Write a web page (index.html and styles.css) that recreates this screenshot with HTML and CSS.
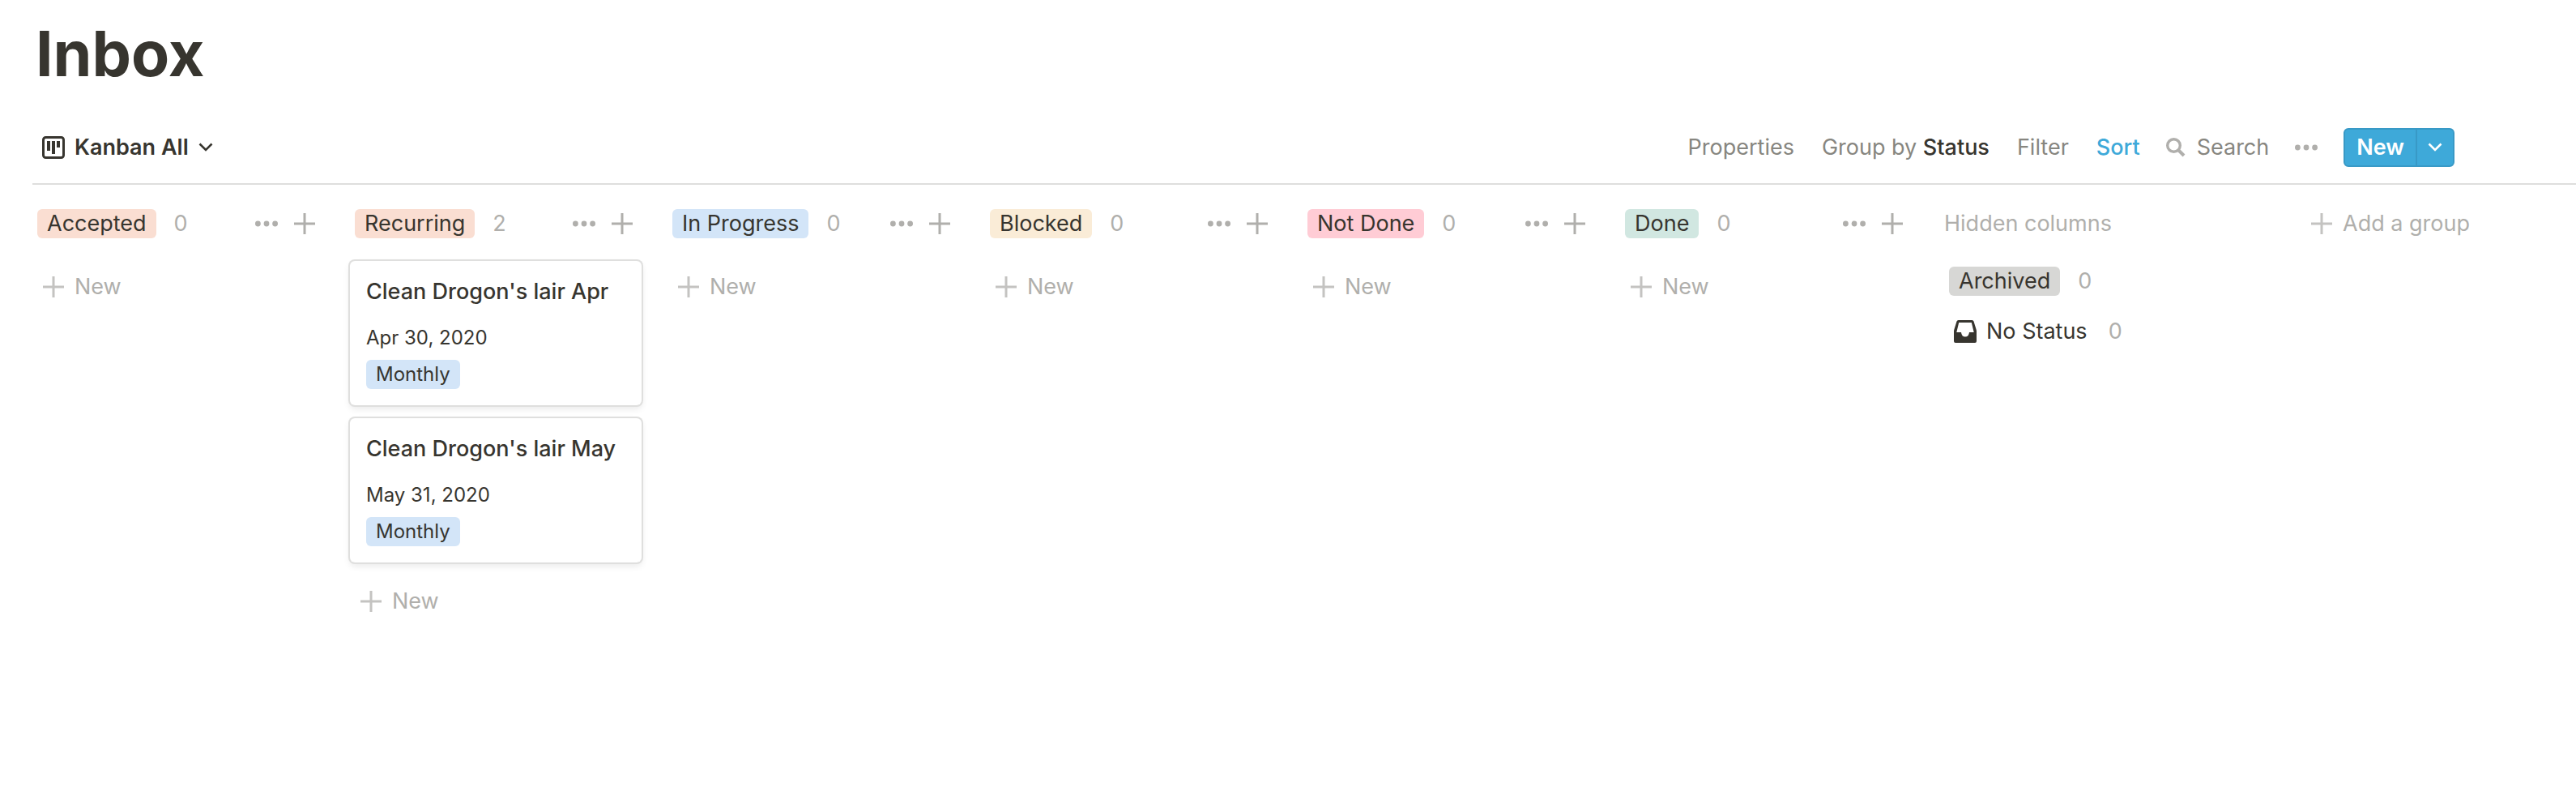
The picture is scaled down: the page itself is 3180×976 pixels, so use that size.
FILE: index.html
```html
<!DOCTYPE html>
<html lang="en">
<head>
<meta charset="utf-8">
<title>Inbox</title>
<link rel="stylesheet" href="styles.css">
</head>
<body>
<svg class="sprite" aria-hidden="true">
  <symbol id="plus" viewBox="0 0 26 26"><path d="M13 0V26M0 13H26" stroke="currentColor" stroke-width="3"/></symbol>
  <symbol id="dots" viewBox="0 0 28 8"><g fill="currentColor"><circle cx="3.4" cy="4" r="3.4"/><circle cx="14" cy="4" r="3.4"/><circle cx="24.6" cy="4" r="3.4"/></g></symbol>
  <symbol id="chevron" viewBox="0 0 18 12"><path d="M1.5 1.5L9 9L16.5 1.5" fill="none" stroke="currentColor" stroke-width="2.6"/></symbol>
</svg>
<main class="page">
  <h1 class="title">Inbox</h1>
  <div class="toolbar">
    <button class="view">
      <svg class="view-icon" viewBox="0 0 28 28"><rect x="1.5" y="1.5" width="25" height="25" rx="3" fill="none" stroke="currentColor" stroke-width="3"/><path d="M6 6h4v12H6zM12 6h4v16h-4zM18 6h4v8h-4z" fill="currentColor"/></svg>
      Kanban All
      <svg class="chevron"><use href="#chevron"/></svg>
    </button>
    <div class="actions">
      <div class="filters">
        <button>Properties</button>
        <button>Group by <span class="strong">Status</span></button>
        <button>Filter</button>
        <button class="sort">Sort</button>
      </div>
      <button class="search"><svg class="search-icon" viewBox="0 0 24 24"><circle cx="9.5" cy="9.5" r="7.8" fill="none" stroke="currentColor" stroke-width="3.4"/><path d="M15 15L22 22" stroke="currentColor" stroke-width="4"/></svg>Search</button>
      <button class="more" aria-label="More options"><svg class="dots"><use href="#dots"/></svg></button>
      <div class="create">
        <button class="create-main">New</button>
        <button class="create-menu" aria-label="New from template"><svg class="chevron"><use href="#chevron"/></svg></button>
      </div>
    </div>
  </div>
  <div class="board">
    <section class="column">
      <header class="head"><span class="tag orange">Accepted</span><span class="count">0</span><button class="tool push" aria-label="Column options"><svg class="dots"><use href="#dots"/></svg></button><button class="tool" aria-label="Add card"><svg class="plus"><use href="#plus"/></svg></button></header>
      <button class="add"><svg class="plus"><use href="#plus"/></svg>New</button>
    </section>
    <section class="column">
      <header class="head"><span class="tag orange">Recurring</span><span class="count">2</span><button class="tool push" aria-label="Column options"><svg class="dots"><use href="#dots"/></svg></button><button class="tool" aria-label="Add card"><svg class="plus"><use href="#plus"/></svg></button></header>
      <article class="card">
        <h2 class="card-title">Clean Drogon's lair Apr</h2>
        <p class="date">Apr 30, 2020</p>
        <span class="tag small blue">Monthly</span>
      </article>
      <article class="card">
        <h2 class="card-title">Clean Drogon's lair May</h2>
        <p class="date">May 31, 2020</p>
        <span class="tag small blue">Monthly</span>
      </article>
      <button class="add"><svg class="plus"><use href="#plus"/></svg>New</button>
    </section>
    <section class="column">
      <header class="head"><span class="tag blue">In Progress</span><span class="count">0</span><button class="tool push" aria-label="Column options"><svg class="dots"><use href="#dots"/></svg></button><button class="tool" aria-label="Add card"><svg class="plus"><use href="#plus"/></svg></button></header>
      <button class="add"><svg class="plus"><use href="#plus"/></svg>New</button>
    </section>
    <section class="column">
      <header class="head"><span class="tag yellow">Blocked</span><span class="count">0</span><button class="tool push" aria-label="Column options"><svg class="dots"><use href="#dots"/></svg></button><button class="tool" aria-label="Add card"><svg class="plus"><use href="#plus"/></svg></button></header>
      <button class="add"><svg class="plus"><use href="#plus"/></svg>New</button>
    </section>
    <section class="column">
      <header class="head"><span class="tag red">Not Done</span><span class="count">0</span><button class="tool push" aria-label="Column options"><svg class="dots"><use href="#dots"/></svg></button><button class="tool" aria-label="Add card"><svg class="plus"><use href="#plus"/></svg></button></header>
      <button class="add"><svg class="plus"><use href="#plus"/></svg>New</button>
    </section>
    <section class="column">
      <header class="head"><span class="tag green">Done</span><span class="count">0</span><button class="tool push" aria-label="Column options"><svg class="dots"><use href="#dots"/></svg></button><button class="tool" aria-label="Add card"><svg class="plus"><use href="#plus"/></svg></button></header>
      <button class="add"><svg class="plus"><use href="#plus"/></svg>New</button>
    </section>
    <section class="column hidden-columns">
      <h2 class="hidden-title">Hidden columns</h2>
      <button class="hidden-row"><span class="tag gray">Archived</span><span class="count">0</span></button>
      <button class="hidden-row"><svg class="tray" viewBox="0 0 28 28"><path fill="currentColor" fill-rule="evenodd" d="M5.6 0H22.4Q24 0 24.500 1.500L27.600 11.500Q28 12.800 28 14V26Q28 28 26 28H2Q0 28 0 26V14Q0 12.800 .4 11.500L3.500 1.500Q4 0 5.600 0ZM6.200 3L3.300 15H9Q9.600 20.500 14 20.500Q18.400 20.500 19 15H24.700L21.800 3Z"/></svg><span class="label">No Status</span><span class="count">0</span></button>
    </section>
    <button class="add add-group"><svg class="plus"><use href="#plus"/></svg>Add a group</button>
  </div>
</main>
</body>
</html>
```
FILE: styles.css
```css
* { box-sizing: border-box; }

body {
  margin: 0;
  background: #fff;
  color: #37352f;
  font: 27px/42px Inter, "Liberation Sans", sans-serif;
}

h1, h2, p { margin: 0; }

button {
  margin: 0;
  padding: 0;
  border: 0;
  background: none;
  color: inherit;
  font: inherit;
  white-space: nowrap;
  cursor: pointer;
}

svg { display: block; flex: none; }

.sprite { position: absolute; width: 0; height: 0; }
.plus { width: 26px; height: 26px; }
.dots { width: 28px; height: 8px; }
.chevron { width: 18px; height: 12px; }

.page { padding: 16px 0 0 40px; }

.title {
  padding-left: 4px;
  font-size: 77px;
  line-height: 100px;
  font-weight: 700;
}

.toolbar {
  display: flex;
  justify-content: space-between;
  align-items: center;
  padding: 42px 150px 20px 12px;
  border-bottom: 2px solid #dededd;
}

.view {
  display: flex;
  align-items: center;
  gap: 12px;
  font-weight: 600;
}

.view-icon { width: 28px; height: 28px; }

.actions,
.filters {
  display: flex;
  align-items: center;
  gap: 32px;
  color: #878680;
}

.filters { gap: 34px; }

.strong { color: #37352f; font-weight: 500; }
.sort { color: #3ea9d9; font-weight: 500; }
.search { display: flex; align-items: center; gap: 14px; }
.search-icon { width: 24px; height: 24px; color: #b0afac; }
.more { color: #b0afac; }

.create {
  display: flex;
  height: 48px;
  overflow: hidden;
  border: 2px solid #3899c6;
  border-radius: 6px;
  background: #3ea9d9;
  color: #fff;
}

.create-main { padding: 0 14px; font-weight: 600; border-right: 2px solid #3899c6; }
.create-menu { padding: 0 13px; }

.board { display: flex; align-items: flex-start; gap: 32px; }

.column { flex: none; width: 360px; }
.hidden-columns { width: 416px; }

.head {
  display: flex;
  align-items: center;
  height: 94px;
  padding: 2px 10px 0 6px;
}

.tag {
  padding: 0 12px;
  border-radius: 6px;
  line-height: 36px;
}

.small { font-size: 24px; }
.orange { background: #faded2; }
.blue { background: #d3e5f8; }
.yellow { background: #faecd7; }
.red { background: #ffccd5; }
.green { background: #d1e7e1; }
.gray { background: #d7d7d5; }

.count { margin-left: 22px; color: #b0afac; }
.tool { padding: 10px; color: #b0afac; line-height: 0; }
.tool + .tool { padding-right: 1px; }
.push { margin-left: auto; }

.card {
  display: flex;
  flex-direction: column;
  align-items: flex-start;
  margin-bottom: 16px;
  padding: 16px 20px 20px;
  border-radius: 6px;
  box-shadow: 0 0 0 2px #dfdfde, 0 4px 8px rgba(15, 15, 15, .1);
}

.card-title { font-size: 27px; line-height: 44px; font-weight: 500; white-space: nowrap; }
.date { margin: 16px 0 8px; font-size: 24px; line-height: 38px; }

.add {
  display: flex;
  align-items: center;
  gap: 13px;
  height: 64px;
  padding-left: 13px;
  color: #b0afac;
}

.add .plus { color: #c4c3c1; }
.add-group { height: 96px; }

.hidden-title {
  padding-left: 8px;
  color: #b0afac;
  font-size: 27px;
  font-weight: 400;
  line-height: 80px;
}

.hidden-columns { padding-top: 8px; }

.hidden-row {
  display: flex;
  align-items: center;
  height: 62px;
  padding-left: 14px;
}

.tray { width: 28px; height: 28px; margin: 0 12px 0 6px; }
.label + .count { margin-left: 26px; }
```
